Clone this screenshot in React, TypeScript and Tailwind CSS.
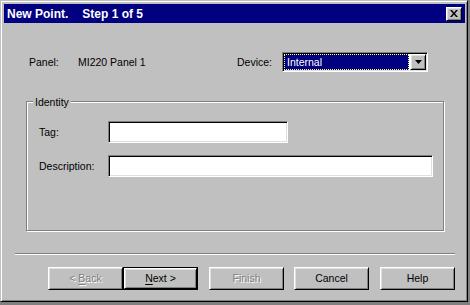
import React from "react";

const raised =
  "border border-t-white border-l-white border-b-black border-r-black shadow-[inset_1px_1px_0_#dfdfdf,inset_-1px_-1px_0_#808080] bg-[#c0c0c0]";
const sunken =
  "border border-t-[#808080] border-l-[#808080] border-b-white border-r-white shadow-[inset_1px_1px_0_#000,inset_-1px_-1px_0_#dfdfdf]";

function Btn({ children, disabled }: { children: React.ReactNode; disabled?: boolean }) {
  return (
    <div
      className={`${raised} w-[75px] h-[23px] flex items-center justify-center ${
        disabled ? "text-[#808080] [text-shadow:1px_1px_0_#fff]" : "text-black"
      }`}
    >
      {children}
    </div>
  );
}

export default function App() {
  return (
    <div
      className="w-[470px] h-[305px] bg-[#808080] text-[10.5px] leading-none text-black"
      style={{ fontFamily: '"Liberation Sans", Arial, sans-serif' }}
    >
      <div className="w-[468px] h-[302px] bg-[#c0c0c0] border border-t-[#c0c0c0] border-l-[#c0c0c0] border-b-black border-r-black shadow-[inset_1px_1px_0_#fff,inset_-1px_-1px_0_#808080] pt-[3px] pl-[3px] pr-[2px] flex flex-col">
        {/* Title bar */}
        <div className="h-[19px] bg-[#000080] flex items-center pl-[3px] pr-[3px]">
          <span className="text-white font-bold text-[12px]">New Point.</span>
          <span className="text-white font-bold text-[12px] ml-[14px]">Step 1 of 5</span>
          <div className="ml-auto w-[16px] h-[14px] flex items-center justify-center border border-t-white border-l-white border-b-black border-r-black shadow-[inset_1px_1px_0_#dfdfdf,inset_-1px_-1px_0_#808080] bg-[#c0c0c0]">
            <svg width="8" height="7" viewBox="0 0 8 7">
              <path d="M0 0h2l2 2.5L6 0h2L5 3.5 8 7H6L4 4.5 2 7H0l3-3.5z" fill="#000" />
            </svg>
          </div>
        </div>

        {/* Panel / Device row */}
        <div className="mt-[29px] h-[20px] flex items-center pl-[25px]">
          <div className="w-[49px]">Panel:</div>
          <div className="w-[159px]">MI220 Panel 1</div>
          <div className="w-[45px]">Device:</div>
          <div className={`${sunken} w-[146px] h-[20px] bg-white p-[1px] flex`}>
            <div className="flex-1 mr-[1px] bg-[#000080] border border-dotted border-[#ffff80] flex items-center pl-[2px] text-white">
              Internal
            </div>
            <div className={`${raised} w-[16px] h-[16px] flex items-center justify-center`}>
              <svg width="7" height="4" viewBox="0 0 7 4">
                <path d="M0 0h7L3.5 4z" fill="#000" />
              </svg>
            </div>
          </div>
        </div>

        {/* Identity group */}
        <div className="mt-[29px] ml-[22px] w-[418px] h-[130px] relative border border-[#808080] shadow-[1px_1px_0_#fff,inset_1px_1px_0_#fff] pl-[12px] pt-[19px] flex flex-col">
          <span className="absolute left-[6px] top-[-6px] bg-[#c0c0c0] px-[2px] leading-[12px]">Identity</span>
          <div className="flex items-center h-[22px]">
            <div className="w-[69px]">Tag:</div>
            <div className={`${sunken} w-[180px] h-[22px] bg-white`} />
          </div>
          <div className="flex items-center h-[22px] mt-[12px]">
            <div className="w-[69px]">Description:</div>
            <div className={`${sunken} w-[325px] h-[22px] bg-white`} />
          </div>
        </div>

        {/* Separator */}
        <div className="mt-[22px] ml-[11px] w-[440px] h-[2px] border-t border-t-[#808080] border-b border-b-white" />

        {/* Buttons */}
        <div className="mt-[12px] ml-[44px] flex">
          <Btn disabled>
            &lt;&nbsp;<span className="underline decoration-1 underline-offset-[2px]">B</span>ack
          </Btn>
          <div className="w-[75px] h-[23px] border border-black">
            <div className={`${raised} w-full h-full flex items-center justify-center`}>
              <span className="underline decoration-1 underline-offset-[2px]">N</span>ext&nbsp;&gt;
            </div>
          </div>
          <div className="ml-[11px]">
            <Btn disabled>Finish</Btn>
          </div>
          <div className="ml-[10px]">
            <Btn>Cancel</Btn>
          </div>
          <div className="ml-[11px]">
            <Btn>Help</Btn>
          </div>
        </div>
      </div>
    </div>
  );
}
